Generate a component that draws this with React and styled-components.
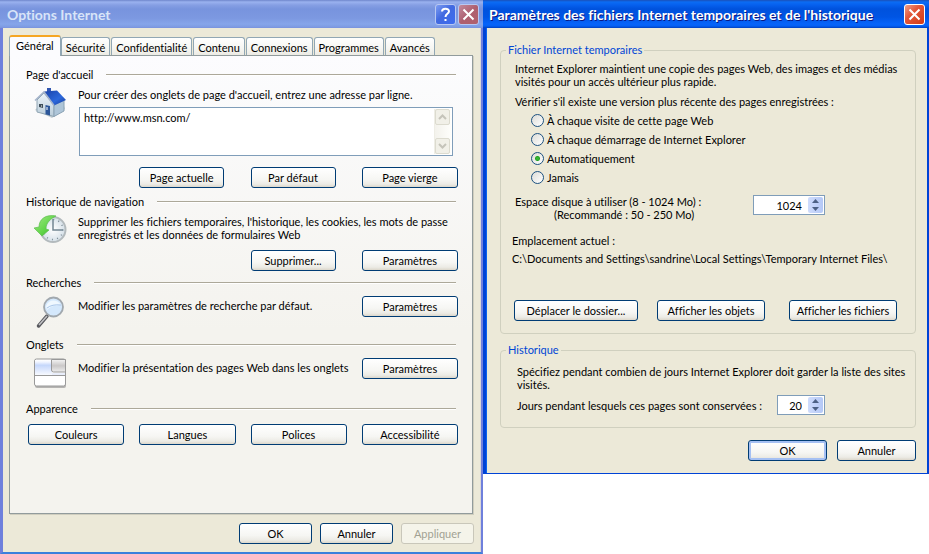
import React from 'react';
import styled, { createGlobalStyle, css } from 'styled-components';

const Global = createGlobalStyle`
  *, *::before, *::after { box-sizing: border-box; }
  body { margin: 0; background: #fff; font-variant-ligatures: none; }
  body, button, input, textarea { font: 11px/13px Lato, "Liberation Sans", sans-serif; color: #000; }
  button, input, textarea, h1, h2 { font-variant-ligatures: none !important; }
  #root { font-variant-ligatures: none; }
  p { margin: 0; }
`;

const Desktop = styled.main`
  display: grid;
  grid-template-columns: minmax(0, 483fr) minmax(0, 446fr);
  align-items: start;
`;

const Window = styled.section`
  background: #ece9d8;
  border: solid ${(p) => (p.$active ? '#0043d6' : '#6f80dc')};
  border-width: ${(p) => (p.$active ? '0 2px 1px 3px' : '0 2px 2px 3px')};
  border-bottom-color: ${(p) => (p.$active ? '#0043d6' : '#3b80dc')};
  box-shadow: ${(p) => (p.$active ? 'inset 1px 0 #0a63ee' : 'inset -1px 0 #d8d6d8')};
`;

const TitleBar = styled.header`
  display: flex;
  align-items: center;
  gap: 2px;
  height: 28px;
  margin: 0 -2px 0 -3px;
  padding: 1px 4px 0 ${(p) => (p.$active ? '6px' : '7px')};
  background: ${(p) => (p.$active
    ? 'linear-gradient(#1b50b8 0, #0b6cf4 2px, #0660ee 5px, #0052dd 9px, #0055e4 17px, #0664fa 24px, #0460f4 26px, #0040c0)'
    : 'linear-gradient(#6f86cc 0, #9ab2ef 2px, #869fe4 5px, #7894de 9px, #7c98e1 18px, #86a5ea 24px, #7e9be2 27px, #7890dc)')};
`;

const Title = styled.h1`
  flex: 1;
  margin: 0;
  font: bold 14px/18px Lato, "Liberation Sans", sans-serif;
  white-space: nowrap;
  color: ${(p) => (p.$active ? '#fff' : '#d8e4f8')};
  text-shadow: ${(p) => (p.$active ? '1px 1px #0a1883' : 'none')};
`;

const captionFill = {
  help: 'linear-gradient(135deg, #7d9df2, #4169e0 45%, #3d6cf0)',
  muted: 'linear-gradient(135deg, #c28b9e, #ae5f70 50%, #b0606c)',
  close: 'linear-gradient(135deg, #f0a088, #e2573a 40%, #d23a14)',
};

const CaptionButton = styled.button`
  display: grid;
  place-items: center;
  width: 21px;
  height: 21px;
  padding: 0;
  border: 1px solid ${(p) => (p.$kind === 'close' ? '#fff' : '#b8c8f2')};
  border-radius: 3px;
  background: ${(p) => captionFill[p.$kind]};
`;

const OptionsBody = styled.div`
  padding: 7px 8px 8px 6px;
`;

const Tabs = styled.nav`
  display: flex;
  align-items: flex-end;
  gap: 1px;
  height: 20px;
`;

const Tab = styled.button`
  height: 18px;
  padding: 1px 4px 0;
  border: 1px solid #91a7b4;
  border-bottom: 0;
  border-radius: 3px 3px 0 0;
  background: linear-gradient(#fff, #f6f6f2 60%, #ecebe4);
  white-space: nowrap;
  ${(p) => p.$selected && css`
    position: relative;
    height: 21px;
    margin: 0 -1px -1px 0;
    padding: 0 6px 2px;
    border-top: 2px solid #f5a623;
    background: #fcfcfe;
  `}
`;

const Panel = styled.div`
  min-height: 459px;
  padding: 12px 14px 16px 16px;
  border: 1px solid #919b9c;
  background: linear-gradient(#fcfcfe, #f4f3ee 60%);
  box-shadow: 1px 1px #d0cebf;
`;

const Section = styled.section`
  margin-top: ${(p) => p.$before || 0}px;
`;

const SectionTitle = styled.h2`
  display: flex;
  align-items: center;
  gap: 13px;
  margin: 0 2px 6px 0;
  font: 11px/14px Lato, "Liberation Sans", sans-serif;
  &::after {
    content: '';
    flex: 1;
    height: 2px;
    border-top: 1px solid #aca899;
    background: #fff;
  }
`;

const Row = styled.div`
  display: flex;
  align-items: flex-start;
`;

const IconCell = styled.div`
  flex: none;
  width: 52px;
  padding-left: 8px;
  svg { display: block; }
`;

const RowContent = styled.div`
  flex: 1;
  min-width: 0;
  white-space: nowrap;
`;

const RowText = styled(RowContent)`
  padding-top: 3px;
`;

const ButtonGrid = styled.div`
  display: grid;
  grid-template-columns: repeat(4, 1fr);
  gap: 15px;
  margin: ${(p) => p.$above}px 0 0 2px;
`;

const XpButton = styled.button`
  height: 21px;
  padding: 0 4px;
  width: ${(p) => p.$width || 'auto'};
  grid-column-start: ${(p) => p.$column || 'auto'};
  border: 1px solid #003c74;
  border-radius: 3px;
  background: linear-gradient(#fff, #f6f6f3 60%, #ecebe5 85%, #dcd7cb);
  white-space: nowrap;
  ${(p) => p.$default && css`
    box-shadow: inset 0 0 0 2px #a5c0f3, inset 0 -1px #6982ee;
  `}
  &:disabled {
    border-color: #c9c7ba;
    background: #f5f4ea;
    color: #a1a192;
  }
`;

const AddressBox = styled.div`
  display: flex;
  height: 49px;
  margin: 6px 5px 0 1px;
  padding: 1px;
  border: 1px solid #7f9db9;
  background: #fff;
`;

const AddressInput = styled.textarea`
  flex: 1;
  min-width: 0;
  padding: 2px 3px;
  border: 0;
  outline: 0;
  resize: none;
  overflow: hidden;
  background: none;
`;

const ScrollBar = styled.div`
  display: flex;
  flex-direction: column;
  justify-content: space-between;
  width: 17px;
  padding: 0;
  border-left: 1px solid #eeede5;
  background: linear-gradient(90deg, #f3f2ec, #fefefb);
`;

const ScrollButton = styled.button`
  display: grid;
  place-items: center;
  width: 15px;
  height: 16px;
  padding: 0;
  border: 1px solid #dcdbcf;
  border-radius: 2px;
  background: #f1f0e8;
`;

const Footer = styled.footer`
  display: flex;
  justify-content: flex-end;
  gap: ${(p) => p.$gap}px;
  margin: ${(p) => p.$above}px ${(p) => p.$outset || 0}px 0 0;
`;

const SettingsBody = styled.div`
  padding: 15px 11px 12px 14px;
`;

const Group = styled.fieldset`
  min-width: 0;
  margin: ${(p) => p.$before || 0}px 0 0;
  padding: ${(p) => p.$top}px 14px 12px;
  border: 1px solid #d0d0bf;
  border-radius: 4px;
  white-space: nowrap;
`;

const GroupTitle = styled.legend`
  margin-left: -9px;
  padding: 0 2px;
  line-height: 14px;
  color: #0046d5;
`;

const Intro = styled.p`
  padding-left: 2px;
`;

const Choices = styled.div`
  margin: 7px 0 8px;
`;

const ChoiceList = styled.div`
  padding: 3px 0 0 16px;
`;

const Choice = styled.label`
  display: flex;
  align-items: center;
  gap: 3px;
  height: 19px;
`;

const Radio = styled.input`
  appearance: none;
  width: 13px;
  height: 13px;
  margin: 0;
  border: 1px solid #1c5180;
  border-radius: 50%;
  background: linear-gradient(135deg, #dcdcd7, #fff);
  &:checked {
    background: radial-gradient(circle, #35b535 0 1px, #21a121 2px, transparent 3px), linear-gradient(135deg, #dcdcd7, #fff);
  }
`;

const Field = styled.div`
  display: flex;
  align-items: ${(p) => (p.$align || 'flex-start')};
  justify-content: space-between;
  margin-top: ${(p) => p.$above || 0}px;
  padding: 0 76px 0 ${(p) => p.$indent || 0}px;
`;

const FieldLabel = styled.label`
  text-align: right;
`;

const Hint = styled.span`
  padding-right: 7px;
`;

const SpinBox = styled.div`
  display: flex;
  width: ${(p) => p.$width};
  height: 20px;
  padding: 1px;
  border: 1px solid #7f9db9;
  background: #fff;
`;

const SpinInput = styled.input`
  flex: 1;
  min-width: 0;
  padding: 0 6px 0 0;
  border: 0;
  outline: 0;
  background: none;
  text-align: right;
`;

const SpinArrows = styled.div`
  display: grid;
  width: 15px;
  border-radius: 2px;
  overflow: hidden;
  background: linear-gradient(90deg, #cfdcfc, #b4c8f6);
`;

const SpinButton = styled.button`
  display: grid;
  place-items: center;
  padding: 0;
  border: 0;
  background: none;
`;

const Location = styled.div`
  display: grid;
  gap: 5px;
  margin: 13px 0 35px -3px;
`;

const FolderButtons = styled.div`
  display: flex;
  gap: 19px;
  margin: 0 4px 0 -1px;
  :last-child { margin-left: auto; }
`;

const Arrow = ({ down, color }) => (
  <svg width="9" height="6" viewBox="0 0 9 6" aria-hidden="true">
    <path d={down ? 'M1 1 4.5 4.5 8 1' : 'M1 5 4.5 1.5 8 5'} fill="none" stroke={color} strokeWidth="2" />
  </svg>
);

const SpinArrow = ({ down }) => (
  <svg width="7" height="4" viewBox="0 0 7 4" aria-hidden="true">
    <path d={down ? 'M0 0H7L3.5 4Z' : 'M0 4H7L3.5 0Z'} fill="#4d6185" />
  </svg>
);

const Cross = () => (
  <svg width="13" height="13" viewBox="0 0 13 13" aria-hidden="true">
    <path d="M1.5 1.5 11.5 11.5M11.5 1.5 1.5 11.5" stroke="#fff" strokeWidth="2" />
  </svg>
);

const Question = () => (
  <svg width="13" height="15" viewBox="0 0 13 15" aria-hidden="true">
    <path d="M3 4.5C3 .8 10 .8 10 4.3 10 7 6.5 6.7 6.5 10" fill="none" stroke="#fff" strokeWidth="2" />
    <path d="M5.5 12h2v2h-2z" fill="#fff" />
  </svg>
);

const HouseIcon = () => (
  <svg width="33" height="31" viewBox="0 0 33 31" aria-hidden="true">
    <defs>
      <linearGradient id="roof" x1="0" y1="0" x2="1" y2="1">
        <stop offset="0" stopColor="#1a42a8" /><stop offset=".6" stopColor="#2c68dc" /><stop offset="1" stopColor="#173a96" />
      </linearGradient>
      <linearGradient id="wall" x1="0" y1="0" x2="0" y2="1">
        <stop offset="0" stopColor="#eef5fb" /><stop offset="1" stopColor="#b8cbd8" />
      </linearGradient>
    </defs>
    <path d="M1 22 4 19 17 25 30 18 31 21 18 30Z" fill="#9daeb6" opacity=".6" />
    <path d="M3 12 10 5 20 17V28.5L3 24Z" fill="url(#wall)" stroke="#8fa4b2" />
    <path d="M20 17 30 12V23L20 28.5Z" fill="#aec5d8" stroke="#8aa2b4" />
    <path d="M13 0h4v6h-4z" fill="#3157b1" />
    <path d="M10 3.500 23 2.500 32 12 20 17.500Z" fill="url(#roof)" />
    <path d="M1 12.500 10 4 20 17.500" fill="none" stroke="#a5b4cb" strokeWidth="1.500" />
    <path d="M11.500 17 16 18v9.500l-4.500-1.300Z" fill="#2c5699" />
    <path d="M12.500 19h1v3h-1z" fill="#fff" />
    <path d="M5 16h4v4l-4-1Z" fill="#3e4e59" />
    <path d="M7 17.500h1v1h-1z" fill="#fff" />
  </svg>
);

const HistoryIcon = () => (
  <svg width="33" height="30" viewBox="0 0 33 30" aria-hidden="true">
    <defs>
      <radialGradient id="dial"><stop offset="0" stopColor="#fff" /><stop offset="1" stopColor="#d5e0e8" /></radialGradient>
      <linearGradient id="arrow" x1="0" y1="0" x2="1" y2="1"><stop offset="0" stopColor="#a4ea85" /><stop offset=".6" stopColor="#5fd447" /><stop offset="1" stopColor="#35ab2b" /></linearGradient>
    </defs>
    <circle cx="19" cy="14.500" r="12.500" fill="url(#dial)" stroke="#b3babd" strokeWidth="2" />
    <circle cx="19" cy="14.500" r="10" fill="none" stroke="#7d8c96" strokeWidth="1.500" strokeDasharray="1 4.236" />
    <path d="M19 4v11h10" fill="none" stroke="#738692" strokeWidth="1.500" />
    <path d="M22 1C12-1 5 4 5 12L0 13 8 21 15 15 12 14C12 8 16 4 22 1Z" fill="url(#arrow)" stroke="#5dbd50" strokeWidth=".7" />
  </svg>
);

const SearchIcon = () => (
  <svg width="33" height="33" viewBox="0 0 33 33" aria-hidden="true">
    <path d="M13 20 4.500 30" stroke="#57585d" strokeWidth="3.500" strokeLinecap="round" />
    <path d="M13 20 5 29" stroke="#c2c2c5" strokeWidth="1.500" />
    <circle cx="19.500" cy="11" r="9.500" fill="#d4e8fc" stroke="#a1a8ae" strokeWidth="1.800" />
    <path d="M12 10C15 3 23 3 27 9 21 10 18 9 13 14Z" fill="#eff8ff" />
    <path d="M13 12Q18 8 27 9" fill="none" stroke="#a9c6e9" />
  </svg>
);

const TabsIcon = () => (
  <svg width="33" height="31" viewBox="0 0 33 31" aria-hidden="true">
    <defs>
      <linearGradient id="tabA" x1="0" y1="0" x2="0" y2="1"><stop offset="0" stopColor="#fff" /><stop offset=".15" stopColor="#eef3ff" /><stop offset=".35" stopColor="#c5d7fb" /><stop offset="1" stopColor="#f8faff" /></linearGradient>
      <linearGradient id="tabB" x1="0" y1="0" x2="0" y2="1"><stop offset="0" stopColor="#f4f4f4" /><stop offset=".5" stopColor="#cac8c8" /><stop offset="1" stopColor="#eee" /></linearGradient>
    </defs>
    <rect x="1" y="3" width="31" height="27" rx="2" fill="#b5b4b2" />
    <rect x=".5" y="1" width="31" height="27" rx="2" fill="#fff" stroke="#999" />
    <path d="M1 2h17v15H1z" fill="url(#tabA)" />
    <path d="M17.500 1.500h14v12.500h-12q-2 0-2-2z" fill="url(#tabB)" stroke="#999" />
    <path d="M18 15h13v2H18z" fill="#e9eefb" />
    <path d="M1 17.500h30" stroke="#999" />
  </svg>
);

function Spinner({ id, value, width }) {
  return (
    <SpinBox $width={width}>
      <SpinInput id={id} type="text" inputMode="numeric" defaultValue={value} />
      <SpinArrows>
        <SpinButton type="button" aria-label="Augmenter"><SpinArrow /></SpinButton>
        <SpinButton type="button" aria-label="Diminuer"><SpinArrow down /></SpinButton>
      </SpinArrows>
    </SpinBox>
  );
}

const tabs = ['Général', 'Sécurité', 'Confidentialité', 'Contenu', 'Connexions', 'Programmes', 'Avancés'];
const choices = ['À chaque visite de cette page Web', 'À chaque démarrage de Internet Explorer', 'Automatiquement', 'Jamais'];

function OptionsWindow() {
  return (
    <Window>
      <TitleBar>
        <Title>Options Internet</Title>
        <CaptionButton $kind="help" aria-label="Aide"><Question /></CaptionButton>
        <CaptionButton $kind="muted" aria-label="Fermer"><Cross /></CaptionButton>
      </TitleBar>
      <OptionsBody>
        <Tabs>
          {tabs.map((t, i) => <Tab key={t} type="button" $selected={i === 0}>{t}</Tab>)}
        </Tabs>
        <Panel>
          <Section>
            <SectionTitle>Page d'accueil</SectionTitle>
            <Row>
              <IconCell><HouseIcon /></IconCell>
              <RowContent>
                <label htmlFor="home">Pour créer des onglets de page d'accueil, entrez une adresse par ligne.</label>
                <AddressBox>
                  <AddressInput id="home" defaultValue="http://www.msn.com/" />
                  <ScrollBar>
                    <ScrollButton type="button" aria-label="Haut"><Arrow color="#c5c4ba" /></ScrollButton>
                    <ScrollButton type="button" aria-label="Bas"><Arrow down color="#c5c4ba" /></ScrollButton>
                  </ScrollBar>
                </AddressBox>
              </RowContent>
            </Row>
            <ButtonGrid $above={11}>
              <XpButton $column={2} $width="85px">Page actuelle</XpButton>
              <XpButton $column={3} $width="85px">Par défaut</XpButton>
              <XpButton $column={4}>Page vierge</XpButton>
            </ButtonGrid>
          </Section>
          <Section $before={7}>
            <SectionTitle>Historique de navigation</SectionTitle>
            <Row>
              <IconCell><HistoryIcon /></IconCell>
              <RowContent>
                <p>Supprimer les fichiers temporaires, l'historique, les cookies, les mots de passe<br />enregistrés et les données de formulaires Web</p>
              </RowContent>
            </Row>
            <ButtonGrid $above={5}>
              <XpButton $column={3} $width="85px">Supprimer...</XpButton>
              <XpButton $column={4}>Paramètres</XpButton>
            </ButtonGrid>
          </Section>
          <Section $before={5}>
            <SectionTitle>Recherches</SectionTitle>
            <Row>
              <IconCell><SearchIcon /></IconCell>
              <RowText>Modifier les paramètres de recherche par défaut.</RowText>
              <XpButton $width="96px">Paramètres</XpButton>
            </Row>
          </Section>
          <Section $before={9}>
            <SectionTitle>Onglets</SectionTitle>
            <Row>
              <IconCell><TabsIcon /></IconCell>
              <RowText>Modifier la présentation des pages Web dans les onglets</RowText>
              <XpButton $width="96px">Paramètres</XpButton>
            </Row>
          </Section>
          <Section $before={13}>
            <SectionTitle>Apparence</SectionTitle>
            <ButtonGrid $above={8}>
              <XpButton>Couleurs</XpButton>
              <XpButton>Langues</XpButton>
              <XpButton>Polices</XpButton>
              <XpButton>Accessibilité</XpButton>
            </ButtonGrid>
          </Section>
        </Panel>
        <Footer $gap={8} $above={9} $outset={-1}>
          <XpButton $width="73px">OK</XpButton>
          <XpButton $width="73px">Annuler</XpButton>
          <XpButton $width="73px" disabled>Appliquer</XpButton>
        </Footer>
      </OptionsBody>
    </Window>
  );
}

function SettingsWindow() {
  return (
    <Window $active>
      <TitleBar $active>
        <Title $active>Paramètres des fichiers Internet temporaires et de l'historique</Title>
        <CaptionButton $kind="close" aria-label="Fermer"><Cross /></CaptionButton>
      </TitleBar>
      <SettingsBody>
        <Group $top={5}>
          <GroupTitle>Fichier Internet temporaires</GroupTitle>
          <p>Internet Explorer maintient une copie des pages Web, des images et des médias<br />visités pour un accès ultérieur plus rapide.</p>
          <Choices role="radiogroup" aria-labelledby="check">
            <p id="check">Vérifier s'il existe une version plus récente des pages enregistrées :</p>
            <ChoiceList>
              {choices.map((c, i) => (
                <Choice key={c}><Radio type="radio" name="check" defaultChecked={i === 2} />{c}</Choice>
              ))}
            </ChoiceList>
          </Choices>
          <Field>
            <FieldLabel htmlFor="disk">Espace disque à utiliser (8 - 1024 Mo) :<br /><Hint>(Recommandé : 50 - 250 Mo)</Hint></FieldLabel>
            <Spinner id="disk" value="1024" width="72px" />
          </Field>
          <Location>
            <p>Emplacement actuel :</p>
            <p>C:\Documents and Settings\sandrine\Local Settings\Temporary Internet Files\</p>
          </Location>
          <FolderButtons>
            <XpButton $width="124px">Déplacer le dossier...</XpButton>
            <XpButton $width="108px">Afficher les objets</XpButton>
            <XpButton $width="108px">Afficher les fichiers</XpButton>
          </FolderButtons>
        </Group>
        <Group $before={9} $top={8}>
          <GroupTitle>Historique</GroupTitle>
          <Intro>Spécifiez pendant combien de jours Internet Explorer doit garder la liste des sites<br />visités.</Intro>
          <Field $above={4} $align="center" $indent={2}>
            <FieldLabel htmlFor="days">Jours pendant lesquels ces pages sont conservées :</FieldLabel>
            <Spinner id="days" value="20" width="48px" />
          </Field>
        </Group>
        <Footer $gap={10} $above={12}>
          <XpButton $width="79px" $default>OK</XpButton>
          <XpButton $width="79px">Annuler</XpButton>
        </Footer>
      </SettingsBody>
    </Window>
  );
}

export default function App() {
  return (
    <>
      <Global />
      <Desktop>
        <OptionsWindow />
        <SettingsWindow />
      </Desktop>
    </>
  );
}
